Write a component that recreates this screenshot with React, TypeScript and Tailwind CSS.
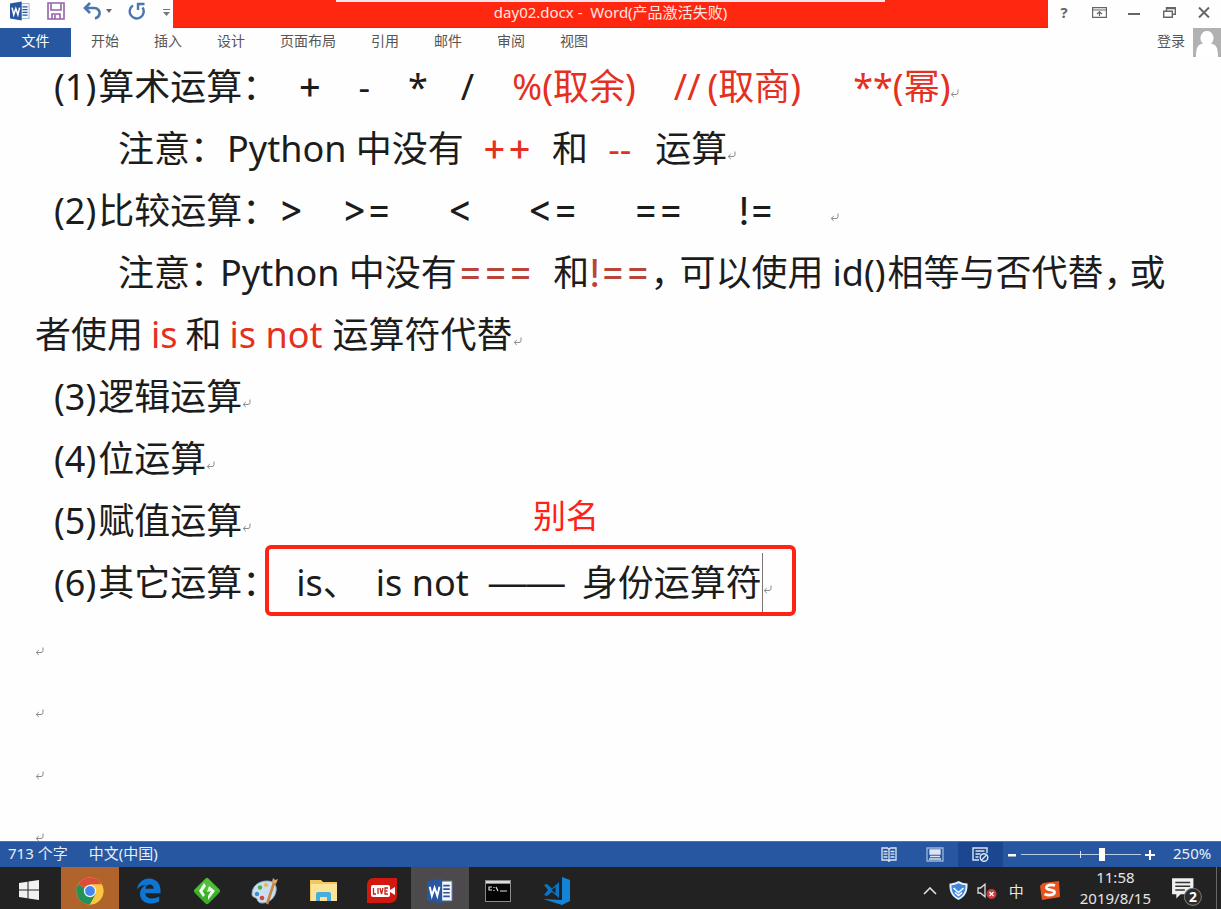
import type { ReactNode } from "react";

const ops = "font-['Inter','Noto_Sans_CJK_SC',sans-serif] text-[38px] [font-feature-settings:'case']";
const half = "[font-feature-settings:'halt']";
const red = "text-[#e5301f]";
const brick = "text-[#b8443a]";

function Mark({ className = "" }: { className?: string }) {
  return (
    <svg className={`mt-3 h-[9px] w-[9px] shrink-0 ${className}`} viewBox="0 0 9 9" fill="none" stroke="#8a8a8a">
      <path d="M8 0.5V3.5Q8 5.5 6 5.5H1.5M3.8 3L1.2 5.5L3.8 8" />
    </svg>
  );
}

function Colon() {
  return <span className={`mr-1 ${half}`}>：</span>;
}

function Line({ indent = "pl-[54px]", children }: { indent?: string; children?: ReactNode }) {
  return <p className={`relative flex h-[62px] shrink-0 items-center whitespace-pre ${indent}`}>{children}</p>;
}

function WordIcon({ className }: { className: string }) {
  return (
    <svg className={className} viewBox="0 0 24 24">
      <path d="M13 3h10v18H13z" fill="#f4f7fb" stroke="#7d9ac4" strokeWidth="0.8" />
      <path d="M15 7h6M15 10.300h6M15 13.600h6M15 17h6" stroke="#2b579a" strokeWidth="1.500" />
      <path d="M0 3L14 0.500V23.500L0 21z" fill="#2857a0" />
      <path d="M2.500 8l2 8.500L7 9l2.500 7.500L11.500 8" fill="none" stroke="#fff" strokeWidth="1.800" />
    </svg>
  );
}

function TitleBar() {
  const btn = "flex h-5 w-5 items-center justify-center";
  return (
    <div className="flex h-7 shrink-0">
      <div className="flex w-[173px] items-start pt-[1px] pl-[10px]">
        <WordIcon className="h-5 w-5" />
        <button aria-label="保存" className={`${btn} ml-4`}>
          <svg className="h-[18px] w-[18px]" viewBox="0 0 18 18" fill="none" stroke="#9264a8" strokeWidth="1.600">
            <path d="M1 1h16v16H1zM4 1v7h10V1M5 17v-5h8v5M8 13v4" />
          </svg>
        </button>
        <button aria-label="撤消" className={`${btn} ml-4`}>
          <svg className="h-[18px] w-[18px]" viewBox="0 0 18 18" fill="none" stroke="#4a76ad" strokeWidth="2.600">
            <path d="M7 1L2 6l5 5M2.500 6H11c4 0 6 3 5.500 6-.4 2.200-2 3.700-4.500 4.500" />
          </svg>
        </button>
        <svg className="mt-2 ml-1 h-1 w-[6px]" viewBox="0 0 6 4"><path d="M0 0h6L3 4z" fill="#666" /></svg>
        <button aria-label="重复" className={`${btn} ml-[15px]`}>
          <svg className="h-[18px] w-[18px]" viewBox="0 0 18 18" fill="none" stroke="#4a76ad" strokeWidth="2.400">
            <path d="M5 3.500A7 7 0 1 0 14.500 5.500M10 8V2h6.500" />
          </svg>
        </button>
        <svg className="mt-2 ml-4 h-[7px] w-[7px]" viewBox="0 0 7 7"><path d="M0 0h7v1H0zM0 3h7L3.500 7z" fill="#777" /></svg>
      </div>
      <div className="relative flex flex-1 justify-center border-b border-[#a04038] bg-[#ff2710] text-[15px] leading-6 whitespace-pre text-[#ffe6e0]">
        <div className="absolute top-0 right-[163px] left-[163px] h-[2px] bg-[#f3e6ee]" />
        day02.docx -  Word(产品激活失败)
      </div>
      <div className="flex w-[173px] items-start justify-end gap-[15px] pt-[2px] pr-[7px] text-[#666]">
        <button aria-label="帮助" className={`${btn} text-[15px] font-bold`}>?</button>
        <button aria-label="功能区显示选项" className={btn}>
          <svg className="h-[11px] w-[15px]" viewBox="0 0 15 11" fill="none" stroke="currentColor" strokeWidth="1.200">
            <path d="M.6.600h13.800v9.800H.6zM.6 3h13.800M7.500 9V5M5 7l2.500-2.300L10 7" />
          </svg>
        </button>
        <button aria-label="最小化" className={btn}>
          <svg className="h-3 w-3" viewBox="0 0 12 12"><path d="M0 7h12v2H0z" fill="currentColor" /></svg>
        </button>
        <button aria-label="还原" className={btn}>
          <svg className="h-[11px] w-[13px]" viewBox="0 0 13 11" fill="none" stroke="currentColor" strokeWidth="1.400">
            <path d="M.7 4.200h8.600v6H.7zM3.500 4V.8h8.800v6.400H9.500M3.500 1.500h8.800" />
          </svg>
        </button>
        <button aria-label="关闭" className={btn}>
          <svg className="h-[11px] w-3" viewBox="0 0 12 11" stroke="currentColor" strokeWidth="2"><path d="M1 .5l10 10M11 .5l-10 10" /></svg>
        </button>
      </div>
    </div>
  );
}

function Ribbon() {
  return (
    <nav className="flex h-[29px] shrink-0 items-start text-sm leading-[26px] text-[#555]">
      <button className="h-[29px] w-[71px] bg-[#2657a0] pb-[3px] text-white">文件</button>
      <div className="flex gap-[35px] pl-5">
        {["开始", "插入", "设计", "页面布局", "引用", "邮件", "审阅", "视图"].map((t) => (
          <button key={t}>{t}</button>
        ))}
      </div>
      <button className="ml-auto">登录</button>
      <svg className="ml-2 h-[29px] w-[28px]" viewBox="0 0 28 29">
        <path d="M0 0h28v29H0z" fill="#b1b1b1" />
        <path d="M14 3a6.500 7 0 0 1 4 12.500C23 16.500 25 19 25 29H3c0-10 2-12.500 7-13.500A6.500 7 0 0 1 14 3z" fill="#fff" />
      </svg>
    </nav>
  );
}

function Document() {
  return (
    <main className="flex min-h-0 flex-1 flex-col overflow-hidden text-4xl leading-[62px] text-[#1c1c1c]">
      <div className="-mt-[1px] flex flex-col">
        <Line>
          <span>(1)</span>
          <span className="ml-[2px]">算术运算</span>
          <Colon />
          <span className={`ml-[33px] ${ops}`}>+</span>
          <span className="ml-9">-</span>
          <span className="ml-[38px]">*</span>
          <span className="ml-[33px]">/</span>
          <span className={`ml-[38px] ${red}`}>%(取余)</span>
          <span className={`ml-[38px] ${red}`}>//</span>
          <span className={`ml-[7px] ${red}`}>(取商)</span>
          <span className={`ml-[52px] ${red}`}>**(幂)</span>
          <Mark />
        </Line>
        <Line indent="pl-[118px]">
          <span>注意</span>
          <Colon />
          <span className="ml-[15px]">Python 中没有</span>
          <span className={`ml-[18px] ${ops} ${red}`}>++</span>
          <span className="ml-5">和</span>
          <span className={`ml-5 ${red}`}>--</span>
          <span className="ml-6">运算</span>
          <Mark />
        </Line>
        <Line>
          <span>(2)</span>
          <span className="ml-[2px]">比较运算</span>
          <Colon />
          <span className={`ml-[14px] ${ops}`}>&gt;</span>
          <span className={`ml-[38px] ${ops}`}>&gt;=</span>
          <span className={`ml-14 ${ops}`}>&lt;</span>
          <span className={`ml-[55px] ${ops}`}>&lt;=</span>
          <span className={`ml-[55px] ${ops}`}>==</span>
          <span className={`ml-[55px] ${ops}`}>!=</span>
          <Mark className="ml-[55px]" />
        </Line>
        <Line indent="pl-[118px]">
          <span>注意</span>
          <Colon />
          <span className="ml-2">Python 中没有</span>
          <span className={`ml-px ${ops} ${brick}`}>===</span>
          <span className="ml-5">和</span>
          <span className={`${ops} ${brick}`}>!==</span>
          <span className={half}>，</span>
          <span className="ml-[11px]">可以使用</span>
          <span className="ml-[9px]">id()</span>
          <span className="ml-[2px]">相等与否代替</span>
          <span className={half}>，</span>
          <span className="ml-2">或</span>
        </Line>
        <Line indent="pl-[35px]">
          <span>者使用</span>
          <span className={`ml-2 ${red}`}>is</span>
          <span className="ml-2">和</span>
          <span className={`ml-2 ${red}`}>is not</span>
          <span className="ml-[10px]">运算符代替</span>
          <Mark />
        </Line>
        <Line><span>(3)</span><span className="ml-[2px]">逻辑运算</span><Mark /></Line>
        <Line><span>(4)</span><span className="ml-[2px]">位运算</span><Mark /></Line>
        <Line><span>(5)</span><span className="ml-[2px]">赋值运算</span><Mark /></Line>
        <Line>
          <span>(6)</span>
          <span className="ml-[2px]">其它运算</span>
          <Colon />
          <span className="ml-8">is、</span>
          <span className="ml-[17px]">is not</span>
          <span className="ml-5 font-['Liberation_Sans',sans-serif] text-[38px]">——</span>
          <span className="ml-[17px]">身份运算符</span>
          <span className="h-[60px] w-px bg-[#777]" />
          <Mark />
          <span className="absolute -top-[7px] left-[265px] h-[71px] w-[531px] rounded-md border-4 border-[#ff2215]" />
          <span className="absolute -top-[60px] left-[533px] text-[33px] leading-12 text-[#ff2215]">别名</span>
        </Line>
        {[0, 1, 2, 3].map((i) => (
          <Line key={i} indent="pl-[35px]"><Mark /></Line>
        ))}
      </div>
    </main>
  );
}

function StatusBar() {
  return (
    <footer className="flex h-[26px] shrink-0 items-center border-t border-[#5b7396] bg-[#2657a0] text-[15px] leading-[22px] text-[#e8eef7]">
      <span className="self-start pl-2">713 个字</span>
      <span className="self-start pl-[21px]">中文(中国)</span>
      <button aria-label="阅读视图" className="ml-auto flex h-full w-[46px] items-center justify-center">
        <svg className="h-[15px] w-4" viewBox="0 0 16 15" fill="none" stroke="#dbe5f3" strokeWidth="1.300">
          <path d="M8 2.500L6.500 1H1v12h5.500L8 14.300 9.500 13H15V1H9.500zM8 2.500V14M2.500 4.500h4M2.500 7.200h4M2.500 10h4M9.500 4.500h4M9.500 7.200h4M9.500 10h4" />
        </svg>
      </button>
      <button aria-label="页面视图" className="flex h-full w-[46px] items-center justify-center">
        <svg className="h-[15px] w-[18px]" viewBox="0 0 18 15" fill="none" stroke="#dbe5f3" strokeWidth="1.300">
          <path d="M1 1h16v13H1z" stroke="#9bb5da" /><path d="M4 3h10v4H4z" fill="#dbe5f3" /><path d="M4 9.500h10M3 12h12" strokeWidth="1.600" />
        </svg>
      </button>
      <button aria-label="Web 版式视图" className="flex h-full w-[45px] items-center justify-center bg-[#1a4790]">
        <svg className="h-[15px] w-[17px]" viewBox="0 0 17 15" fill="none" stroke="#dbe5f3" strokeWidth="1.400">
          <path d="M7 13H1V1h14v5M3.500 4h9M3.500 7h5M3.500 10h3" />
          <circle cx="12" cy="10.500" r="3.800" /><path d="M9.500 13l5-5" />
        </svg>
      </button>
      <button aria-label="缩小" className="flex h-full w-[18px] items-center justify-center">
        <svg className="h-2 w-2" viewBox="0 0 8 8"><path d="M0 3h8v2.500H0z" fill="#fff" /></svg>
      </button>
      <span className="relative flex items-center">
        <input
          type="range"
          aria-label="显示比例"
          min={0}
          max={100}
          defaultValue={68}
          className="h-4 w-[120px] appearance-none bg-transparent [&::-webkit-slider-runnable-track]:h-px [&::-webkit-slider-runnable-track]:bg-[#b9cbe6] [&::-webkit-slider-thumb]:-mt-[6px] [&::-webkit-slider-thumb]:h-[13px] [&::-webkit-slider-thumb]:w-[6px] [&::-webkit-slider-thumb]:appearance-none [&::-webkit-slider-thumb]:bg-white"
        />
        <span className="absolute left-[59px] h-[7px] w-px bg-[#dbe5f3]" />
      </span>
      <button aria-label="放大" className="ml-1 flex h-full w-[10px] items-center justify-center">
        <svg className="h-[10px] w-[10px]" viewBox="0 0 10 10"><path d="M0 4h10v2H0zM4 0h2v10H4z" fill="#fff" /></svg>
      </button>
      <span className="w-[66px] self-start pl-[18px]">250%</span>
    </footer>
  );
}

const apps: { name: string; bg?: string; icon: ReactNode }[] = [
  {
    name: "Chrome",
    bg: "bg-[#b0632a]",
    icon: (
      <svg className="h-7 w-7" viewBox="0 0 28 28">
        <circle cx="14" cy="14" r="13.500" fill="#fbc740" />
        <path d="M14 14L2.300 7.250A13.500 13.500 0 0 0 14 27.500L20 17z" fill="#20925a" />
        <path d="M14 14L2.300 7.250A13.500 13.500 0 0 1 25.700 7.500H14z" fill="#dd4c3b" />
        <path d="M14 7.500h11.700A13.500 13.500 0 0 1 14 27.500L19.600 17.200z" fill="#fbc740" />
        <circle cx="14" cy="14" r="6.200" fill="#f2f2f2" />
        <circle cx="14" cy="14" r="4.900" fill="#4687ee" />
      </svg>
    ),
  },
  {
    name: "Edge",
    icon: (
      <svg className="h-[26px] w-[25px]" viewBox="0 0 25 26">
        <path d="M1 11.500C2 4.500 7 .5 13 .5c7 0 11.500 5 11.500 11.500v3.200H9.200c.3 3.500 3.300 5.300 7 5.300 2.700 0 5-.7 7-1.900v5c-2.200 1.300-5 2-8.200 2C8.300 25.600 4 21.500 4 16c0-4 2.300-7.300 6.200-8.900C5.500 7.300 2.800 9 1 11.500zM9.400 10.800h8.300c0-2.600-1.600-4.200-4-4.200-2.300 0-4 1.600-4.300 4.200z" fill="#0c76d4" />
      </svg>
    ),
  },
  {
    name: "Git",
    icon: (
      <svg className="h-[30px] w-[30px]" viewBox="0 0 30 30">
        <rect x="5" y="5" width="20" height="20" rx="2.500" transform="rotate(45 15 15)" fill="#3fae2b" />
        <path d="M15 2L28 15H2z" fill="#5cc840" opacity=".6" />
        <path d="M12 7L7 15l4 6 2-2-2.500-4L14 10zM17 10l6 5-7 9v-4l3-5-4 1z" fill="#eefbe9" />
      </svg>
    ),
  },
  {
    name: "画图",
    icon: (
      <svg className="h-7 w-[30px]" viewBox="0 0 30 28">
        <path d="M2 17C2 9 9 4 17 4c7 0 10 4 9 10-1 7-7 12-14 12-5 0-4-4-6-5s-4-1-4-4z" fill="#c9dfef" stroke="#8faec6" />
        <circle cx="7" cy="17" r="2.200" fill="#3d8bd0" /><circle cx="10" cy="10.500" r="2.200" fill="#4baf50" />
        <circle cx="16" cy="8" r="2" fill="#e7b63a" /><circle cx="12" cy="21" r="2.300" fill="#cf4a3b" />
        <path d="M25 3L17 27" stroke="#c78345" strokeWidth="2.600" /><path d="M22 5l1-4 2 2 3-1-2 5z" fill="#e0a56b" />
      </svg>
    ),
  },
  {
    name: "文件资源管理器",
    icon: (
      <svg className="h-[23px] w-[27px]" viewBox="0 0 27 23">
        <path d="M0 1h11l2 2h14v19H0z" fill="#f0c860" /><path d="M1 5h26v17H1z" fill="#fbe39a" />
        <path d="M6 22v-7q0-2 2-2h11q2 0 2 2v7h-4v-4h-7v4z" fill="#45aede" />
      </svg>
    ),
  },
  {
    name: "直播",
    icon: (
      <svg className="h-[27px] w-[30px]" viewBox="0 0 30 27">
        <path d="M7 1h23v18q0 7-8 7H0V9q0-8 7-8z" fill="#d3190f" />
        <rect x="4" y="8" width="19" height="12" rx="2" fill="#fff" /><path d="M23 13l5-3v8l-5-3z" fill="#fff" />
        <path d="M6.500 11v6H9M11 11v6M13 11l1.500 6L16 11M21 11h-3v6h3M18 14h2.500" fill="none" stroke="#c5221a" strokeWidth="1.300" />
      </svg>
    ),
  },
  { name: "Word", bg: "bg-[#4c4a4d]", icon: <WordIcon className="h-[26px] w-[26px]" /> },
  {
    name: "命令提示符",
    icon: (
      <svg className="h-[22px] w-[26px]" viewBox="0 0 26 22">
        <path d="M0 0h26v22H0z" fill="#8a8a8a" /><path d="M1 4h24v17H1z" fill="#050505" /><path d="M1 1h24v2H1z" fill="#d8d8d8" />
        <path d="M7 7H4v3h3M9 7v1M9 10v1M11 7l2 4M15 11h7" fill="none" stroke="#ddd" strokeWidth="1.200" />
      </svg>
    ),
  },
  {
    name: "Visual Studio Code",
    icon: (
      <svg className="h-7 w-[29px]" viewBox="0 0 29 28">
        <path d="M20 0l8 3v21l-8 4L1 22l19 1z" fill="#1384d8" />
        <path d="M2 8l3-1 5 4.500 7-6.500v16l-7-6L5 19l-3-1 4-5zM13.500 10L9.500 13l4 3.500z" fill="#0c74c4" fillRule="evenodd" />
      </svg>
    ),
  },
];

function Taskbar() {
  return (
    <div className="flex h-[42px] shrink-0 items-stretch bg-[#222222] text-[15px] text-[#e6e6e6]">
      <button aria-label="开始菜单" className="flex w-[61px] items-center justify-center pt-1 pr-1">
        <svg className="h-5 w-5" viewBox="0 0 20 20" fill="#f1f1f1">
          <path d="M0 3l8.500-1.300v7.800H0zM9.500 1.500L20 0v9.500H9.500zM0 10.500h8.500v7.800L0 17zM9.500 10.500H20V20L9.500 18.500z" />
        </svg>
      </button>
      <div className="flex w-[525px]">
        {apps.map((a) => (
          <button key={a.name} aria-label={a.name} className={`flex flex-1 items-center justify-center pt-[5px] ${a.bg ?? ""}`}>
            {a.icon}
          </button>
        ))}
      </div>
      <div className="ml-auto flex items-center pt-[5px]">
        <svg className="h-2 w-[14px]" viewBox="0 0 14 8" fill="none" stroke="#e0e0e0" strokeWidth="1.600"><path d="M1 7l6-6 6 6" /></svg>
        <svg className="ml-3 h-[19px] w-[19px]" viewBox="0 0 19 19">
          <path d="M9.500 0Q14 2.500 18.500 2.500C19 11 16 16 9.500 19 3 16 0 11 .5 2.500 5 2.500 9.500 0 9.500 0z" fill="#e3effb" />
          <path d="M9.500 2.200q3.700 2 7 2.100C16.700 10.500 14.500 14.500 9.500 17 4.500 14.500 2.300 10.500 2.500 4.300q3.300-.1 7-2.100z" fill="#3f86dd" />
          <path d="M4.500 7l5 4.500L14.500 7M6 11.500l3.500 3 3.500-3" fill="none" stroke="#fff" strokeWidth="1.600" />
        </svg>
        <svg className="ml-[9px] h-4 w-5" viewBox="0 0 20 16" fill="none">
          <path d="M1 5h2.500L8 1.200v12.600L3.500 10H1z" stroke="#ddd" strokeWidth="1.300" />
          <circle cx="14.500" cy="11" r="5" fill="#cf3a40" /><path d="M12.500 9l4 4M16.500 9l-4 4" stroke="#fff" strokeWidth="1.300" />
        </svg>
        <span className="ml-3 leading-5">中</span>
        <svg className="ml-4 h-[19px] w-5" viewBox="0 0 20 19">
          <path d="M3 2L19 0l1 16-18 3L0 5z" fill="#e8541c" />
          <path d="M15 4.500C11 3 6 4 6.500 7c.5 2.500 8 1 8 4 0 3.500-6 3.800-10 2" fill="none" stroke="#fff" strokeWidth="2.800" />
        </svg>
      </div>
      <div className="ml-5 text-center leading-[21px]">
        <div>11:58</div>
        <div>2019/8/15</div>
      </div>
      <button aria-label="通知" className="ml-5 pt-[5px]">
        <svg className="h-8 w-8" viewBox="0 0 30 30">
          <path d="M1 3h20v15H9l-4 4v-4H1z" fill="#f0f0f0" />
          <path d="M4 7h14M4 10.500h14M4 14h9" stroke="#333" strokeWidth="1.400" />
          <circle cx="20.500" cy="20.500" r="8" fill="#2b2b2b" stroke="#777" />
          <text x="20.500" y="25" textAnchor="middle" fontSize="13" fontWeight="700" fill="#fff">2</text>
        </svg>
      </button>
      <span className="ml-[13px] w-[5px] border-l border-[#666]" />
    </div>
  );
}

export default function App() {
  return (
    <div lang="zh-CN" className="flex h-screen flex-col overflow-hidden bg-[#fefefe] font-['Noto_Sans','Noto_Sans_CJK_SC',sans-serif]">
      <TitleBar />
      <Ribbon />
      <Document />
      <StatusBar />
      <Taskbar />
    </div>
  );
}
